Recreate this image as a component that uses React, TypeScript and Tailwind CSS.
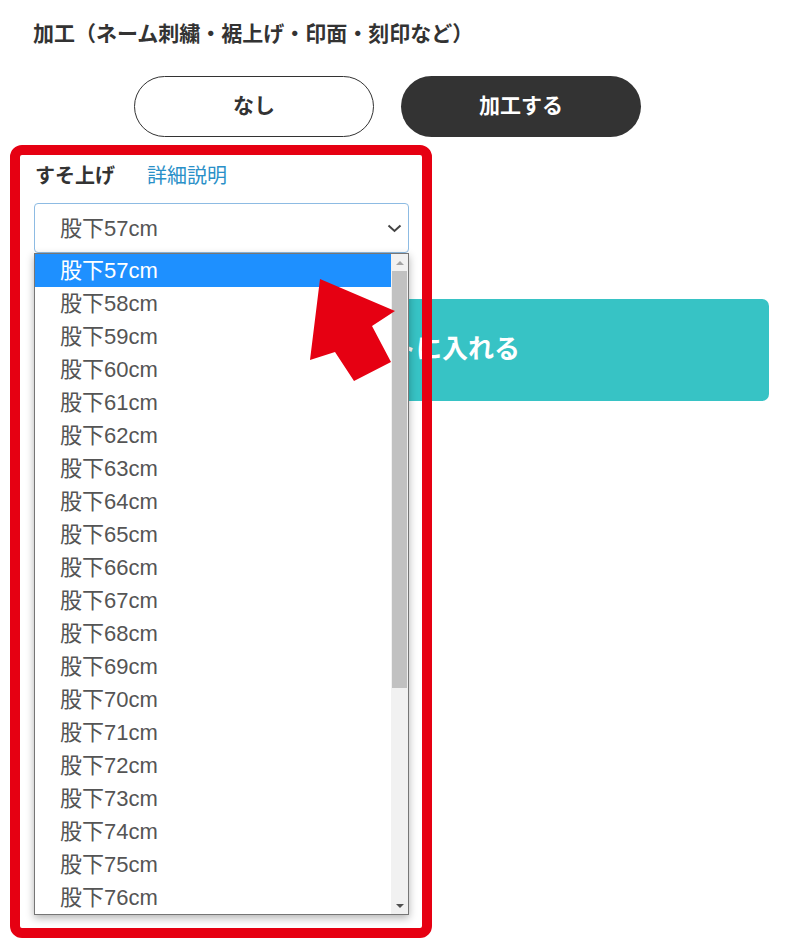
const sizes = Array.from({ length: 20 }, (_, i) => 57 + i);

export default function App() {
  return (
    <div className="relative w-[789px] h-[949px] bg-white overflow-hidden font-['Liberation_Sans','Noto_Sans_CJK_JP',sans-serif] text-[#333]">
      {/* 加工 title */}
      <div className="pt-[17px] pb-[2px] pl-[33px] h-[49px] flex items-center">
        <h2 className="font-['Noto_Sans_CJK_JP',sans-serif] font-bold text-[21px] leading-[30px]">
          加工（ネーム刺繍・裾上げ・印面・刻印など）
        </h2>
      </div>

      {/* options */}
      <div className="flex gap-[27px] pl-[134px] mt-[27px]">
        <button className="w-[240px] h-[61px] pb-[4px] rounded-full border border-[#333] bg-white font-['Noto_Sans_CJK_JP',sans-serif] font-bold text-[21px]">
          なし
        </button>
        <button className="w-[240px] h-[61px] pb-[4px] rounded-full bg-[#333] text-white font-['Noto_Sans_CJK_JP',sans-serif] font-bold text-[21px]">
          加工する
        </button>
      </div>

      {/* すそ上げ */}
      <div className="pl-[35px] mt-[24px] h-[30px] pb-[2px] flex items-center gap-[32px] font-['Noto_Sans_CJK_JP',sans-serif] text-[20px]">
        <span className="font-bold text-[#333]">すそ上げ</span>
        <a className="text-[#2a90c8]">詳細説明</a>
      </div>
      <div className="ml-[34px] mt-[12px] w-[375px] h-[50px] rounded-[4px] border border-[#8dbbe3] flex items-center justify-between pl-[25px] pr-[6px] text-[22px] text-[#555]">
        <span>股下57cm</span>
        <svg width="15" height="9" viewBox="0 0 15 9" className="mt-[1px]">
          <polyline points="1.5,1.5 7.5,7 13.5,1.5" fill="none" stroke="#444" strokeWidth="2" />
        </svg>
      </div>

      {/* cart button */}
      <div className="ml-[89px] mt-[46px] w-[680px] h-[102px] rounded-[7px] bg-[#37c3c5] flex items-center justify-center pb-[7px]">
        <span className="font-['Noto_Sans_CJK_JP',sans-serif] font-bold text-[26px] text-white">
          カートに入れる
        </span>
      </div>

      {/* open dropdown list */}
      <div className="absolute left-[34px] top-[253px] w-[375px] h-[662px] border border-[#767676] bg-white shadow-[0_3px_8px_rgba(0,0,0,0.3)] flex">
        <ul className="flex-1 flex flex-col text-[22px] text-[#555]">
          {sizes.map((s, i) => (
            <li
              key={s}
              className={
                i === 0
                  ? "h-[33px] flex items-center pl-[25px] bg-[#1e90ff] text-white"
                  : "h-[33px] flex items-center pl-[25px]"
              }
            >
              股下{s}cm
            </li>
          ))}
        </ul>
        <div className="w-[17px] bg-[#f1f1f1] flex flex-col">
          <div className="h-[17px] flex items-center justify-center">
            <div className="w-0 h-0 border-l-[4px] border-r-[4px] border-b-[4px] border-l-transparent border-r-transparent border-b-[#a3a3a3]" />
          </div>
          <div className="mx-[1px] h-[417px] bg-[#c1c1c1]" />
          <div className="flex-1" />
          <div className="h-[17px] flex items-center justify-center">
            <div className="w-0 h-0 border-l-[4px] border-r-[4px] border-t-[4px] border-l-transparent border-r-transparent border-t-[#505050]" />
          </div>
        </div>
      </div>

      {/* red annotation frame */}
      <div className="absolute left-[10px] top-[145px] w-[422px] h-[793px] border-[10px] border-[#e60012] rounded-[12px] pointer-events-none" />

      {/* red arrow */}
      <svg className="absolute left-0 top-0 pointer-events-none" width="789" height="949">
        <polygon
          points="320,279 395,311 372,326 391,362 354,381 335,352 310,360"
          fill="#e60012"
        />
      </svg>
    </div>
  );
}
